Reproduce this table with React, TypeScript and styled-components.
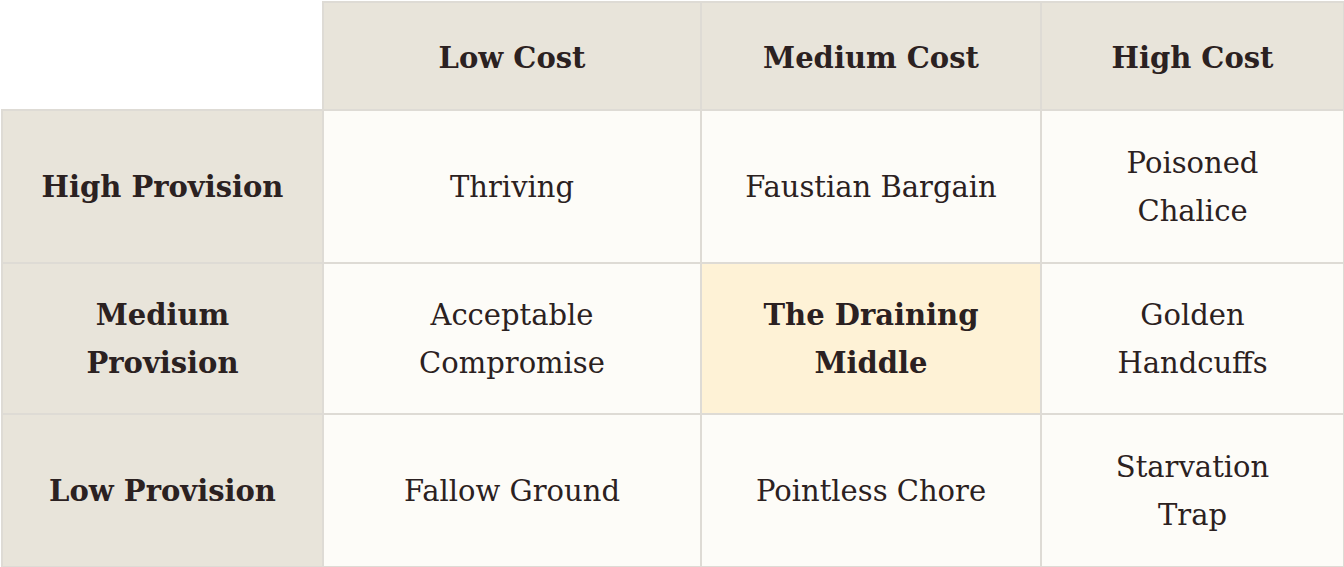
import React from "react";
import styled, { createGlobalStyle } from "styled-components";

const GlobalStyle = createGlobalStyle`
	html, body {
		margin: 0;
		padding: 0;
		background: #ffffff;
	}
`;

const Table = styled.table`
	border-collapse: collapse;
	table-layout: fixed;
	width: 1342px;
	margin: 1px 0 0 1px;
	font-family: "DejaVu Serif", "Liberation Serif", serif;
	color: #2b2121;
	font-size: 29px;
	line-height: 48px;
	text-align: center;
`;

const Col = styled.col<{ $width: number }>`
	width: ${(props) => props.$width}px;
`;

const Row = styled.tr<{ $height: number }>`
	height: ${(props) => props.$height}px;
`;

const Corner = styled.td`
	border: none;
	background: #ffffff;
`;

const HeadCell = styled.th`
	border: 2px solid #dedbd5;
	background: #e8e4da;
	font-weight: 700;
	font-size: 29px;
	padding: 0 20px;
	vertical-align: middle;
`;

const ColumnHead = styled(HeadCell)`
	padding-top: 4px;
`;

const Cell = styled.td<{ $highlight?: boolean }>`
	border: 2px solid #dedbd5;
	background: ${(props) => (props.$highlight ? "#fef2d6" : "#fdfcf8")};
	font-weight: ${(props) => (props.$highlight ? 700 : 400)};
	padding: 0 40px;
	vertical-align: middle;
`;

const costs = ["Low Cost", "Medium Cost", "High Cost"];

const rows = [
	{ label: "High Provision", cells: ["Thriving", "Faustian Bargain", "Poisoned Chalice"], height: 153 },
	{ label: "Medium Provision", cells: ["Acceptable Compromise", "The Draining Middle", "Golden Handcuffs"], height: 151 },
	{ label: "Low Provision", cells: ["Fallow Ground", "Pointless Chore", "Starvation Trap"], height: 153 },
];

export default function App() {
	return (
		<>
			<GlobalStyle />
			<Table>
				<colgroup>
					<Col $width={321} />
					<Col $width={378} />
					<Col $width={340} />
					<Col $width={303} />
				</colgroup>
				<thead>
					<Row $height={108}>
						<Corner />
						{costs.map((c) => (
							<ColumnHead key={c}>{c}</ColumnHead>
						))}
					</Row>
				</thead>
				<tbody>
					{rows.map((r) => (
						<Row key={r.label} $height={r.height}>
							<HeadCell scope="row">{r.label}</HeadCell>
							{r.cells.map((c, i) => (
								<Cell key={c} $highlight={r.label === "Medium Provision" && i === 1}>
									{c}
								</Cell>
							))}
						</Row>
					))}
				</tbody>
			</Table>
		</>
	);
}
